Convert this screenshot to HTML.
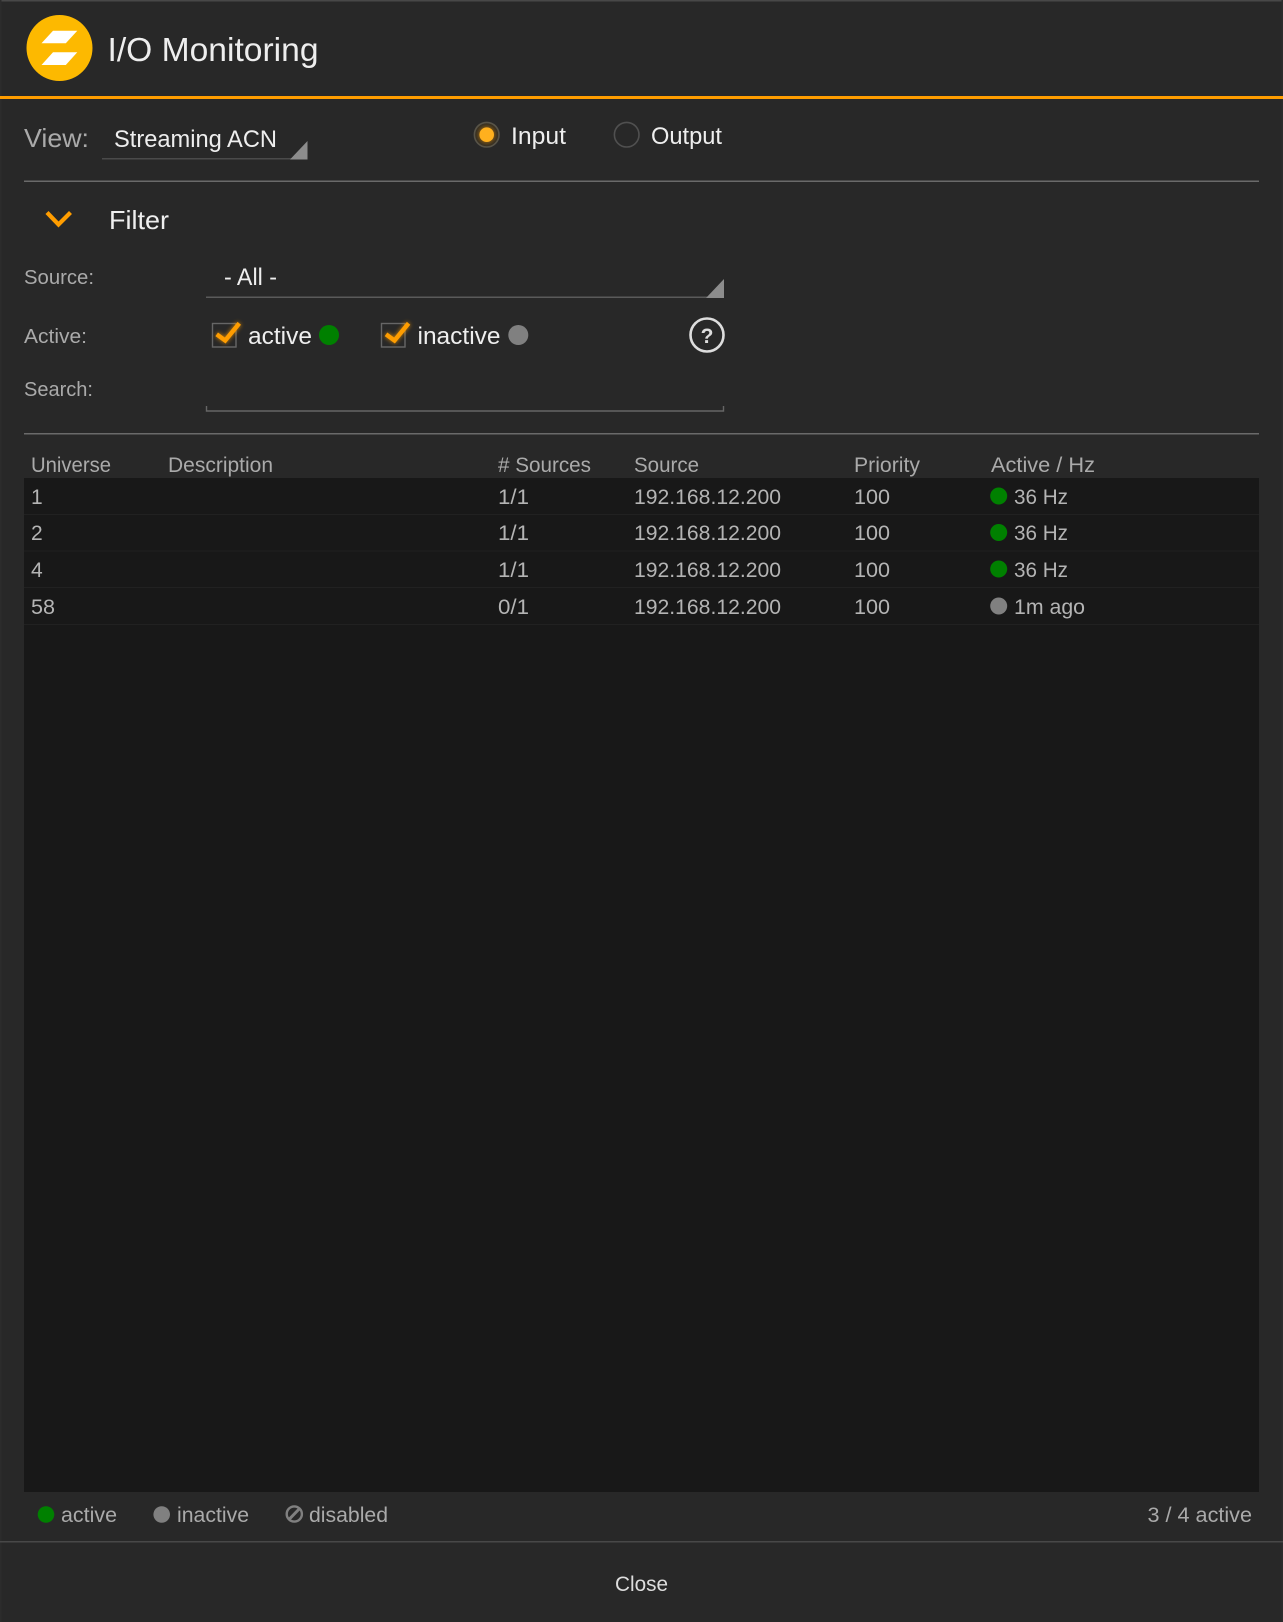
<!DOCTYPE html>
<html><head><meta charset="utf-8"><title>I/O Monitoring</title>
<style>
html,body{margin:0;padding:0;background:#282828;width:1283px;height:1622px;overflow:hidden}
svg{display:block;position:absolute;left:0;top:0}
text{font-family:"Liberation Sans",sans-serif;white-space:pre}
.h{font-size:21px;fill:#aaa}
.c{font-size:21px;fill:#b4b4b4}
.l{font-size:20px;fill:#aaa}
.w{font-size:24px;fill:#eee}
</style></head><body>
<svg width="1283" height="1622" viewBox="0 0 1283 1622" xmlns="http://www.w3.org/2000/svg">
<defs><filter id="g" x="-50%" y="-50%" width="200%" height="200%"><feGaussianBlur stdDeviation="2"/></filter></defs>
<rect width="1283" height="1622" fill="#282828"/>
<rect width="1283" height="1.5" fill="#484848"/>
<rect y="0" width="1.5" height="1622" fill="#2c2c2c"/>
<rect x="1281.5" y="0" width="1.5" height="1622" fill="#2c2c2c"/>
<rect y="96" width="1283" height="3" fill="#ff9d00"/>

<circle cx="59.5" cy="48" r="33" fill="#fdb900"/>
<polygon points="41.5,43.3 53,30.7 77.3,30.7 65.8,43.3" fill="#fff"/>
<polygon points="41.5,65 53,52.3 77.3,52.3 65.8,65" fill="#fff"/>
<text x="107.5" y="61" font-size="33" fill="#eee" textLength="211" lengthAdjust="spacingAndGlyphs">I/O Monitoring</text>

<text x="24" y="147" font-size="26" fill="#aaa" textLength="65" lengthAdjust="spacingAndGlyphs">View:</text>
<text class="w" x="114" y="147" textLength="163" lengthAdjust="spacingAndGlyphs">Streaming ACN</text>
<rect x="102" y="158" width="205" height="1.5" fill="#4a4a4a"/>
<polygon points="290,159.5 307.5,141 307.5,159.5" fill="#8c8c8c"/>

<circle cx="486.7" cy="134.7" r="12.3" fill="#302c24" stroke="#565349" stroke-width="1.6"/>
<circle cx="486.7" cy="134.7" r="8.5" fill="#ff9d00" opacity=".45" filter="url(#g)"/>
<circle cx="486.7" cy="134.7" r="7.3" fill="#ffb01e"/>
<text class="w" x="511" y="144" textLength="55" lengthAdjust="spacingAndGlyphs">Input</text>
<circle cx="626.7" cy="134.7" r="12.3" fill="none" stroke="#505050" stroke-width="1.6"/>
<text class="w" x="651" y="144" textLength="71" lengthAdjust="spacingAndGlyphs">Output</text>

<rect x="24" y="180.5" width="1235" height="1.5" fill="#6a6a6a"/>

<path d="M47 212.5L58.5 224.5L70.5 212.5" fill="none" stroke="#ff9d00" stroke-width="4.2"/>
<text x="109" y="229" font-size="26" fill="#eee" textLength="60" lengthAdjust="spacingAndGlyphs">Filter</text>

<text class="l" x="24" y="284" textLength="70" lengthAdjust="spacingAndGlyphs">Source:</text>
<text class="w" x="224" y="285" textLength="53" lengthAdjust="spacingAndGlyphs">- All -</text>
<rect x="206" y="296.5" width="518" height="1.5" fill="#5a5a5a"/>
<polygon points="706,298 724,279 724,298" fill="#8c8c8c"/>

<text class="l" x="24" y="343" textLength="63" lengthAdjust="spacingAndGlyphs">Active:</text>
<rect x="212.5" y="323.5" width="23.5" height="23.5" fill="none" stroke="#666" stroke-width="1.4"/>
<path d="M216.7 334.3L225.2 340.5L239.3 323.3" fill="none" stroke="#ff9d00" stroke-width="5" opacity=".7" filter="url(#g)"/>
<path d="M216.7 334.3L225.2 340.5L239.3 323.3" fill="none" stroke="#ff9d00" stroke-width="4.4"/>
<text class="w" x="248" y="344" textLength="64" lengthAdjust="spacingAndGlyphs">active</text>
<circle cx="329" cy="335" r="10" fill="#008000"/>

<rect x="381.5" y="323.5" width="23.5" height="23.5" fill="none" stroke="#666" stroke-width="1.4"/>
<path d="M386 334.3L394.5 340.5L408.6 323.3" fill="none" stroke="#ff9d00" stroke-width="5" opacity=".7" filter="url(#g)"/>
<path d="M386 334.3L394.5 340.5L408.6 323.3" fill="none" stroke="#ff9d00" stroke-width="4.4"/>
<text class="w" x="417.5" y="344" textLength="83" lengthAdjust="spacingAndGlyphs">inactive</text>
<circle cx="518.3" cy="335" r="10" fill="#808080"/>

<circle cx="707" cy="335" r="16.5" fill="none" stroke="#ddd" stroke-width="2.6"/>
<text x="707" y="343" font-size="21" font-weight="bold" fill="#ddd" text-anchor="middle">?</text>

<text class="l" x="24" y="396" textLength="69" lengthAdjust="spacingAndGlyphs">Search:</text>
<path d="M206.5 406V411H723.5V406" fill="none" stroke="#666" stroke-width="1.4"/>

<rect x="24" y="433" width="1235" height="1.5" fill="#6a6a6a"/>

<text class="h" x="31" y="472" textLength="80" lengthAdjust="spacingAndGlyphs">Universe</text>
<text class="h" x="168" y="472" textLength="105" lengthAdjust="spacingAndGlyphs">Description</text>
<text class="h" x="498" y="472" textLength="93" lengthAdjust="spacingAndGlyphs"># Sources</text>
<text class="h" x="634" y="472" textLength="65" lengthAdjust="spacingAndGlyphs">Source</text>
<text class="h" x="854" y="472" textLength="66" lengthAdjust="spacingAndGlyphs">Priority</text>
<text class="h" x="991" y="472" textLength="104" lengthAdjust="spacingAndGlyphs">Active / Hz</text>

<rect x="24" y="478" width="1235" height="1014" fill="#181818"/>
<rect x="24" y="514" width="1235" height="1" fill="#212121"/>
<rect x="24" y="550.5" width="1235" height="1" fill="#212121"/>
<rect x="24" y="587" width="1235" height="1" fill="#212121"/>
<rect x="24" y="624" width="1235" height="1" fill="#212121"/>

<g>
<text class="c" x="31" y="504">1</text>
<text class="c" x="498" y="504" textLength="31" lengthAdjust="spacingAndGlyphs">1/1</text>
<text class="c" x="634" y="504" textLength="147" lengthAdjust="spacingAndGlyphs">192.168.12.200</text>
<text class="c" x="854" y="504" textLength="36" lengthAdjust="spacingAndGlyphs">100</text>
<circle cx="998.7" cy="496" r="8.5" fill="#008000"/>
<text class="c" x="1014" y="504" textLength="54" lengthAdjust="spacingAndGlyphs">36 Hz</text>

<text class="c" x="31" y="540">2</text>
<text class="c" x="498" y="540" textLength="31" lengthAdjust="spacingAndGlyphs">1/1</text>
<text class="c" x="634" y="540" textLength="147" lengthAdjust="spacingAndGlyphs">192.168.12.200</text>
<text class="c" x="854" y="540" textLength="36" lengthAdjust="spacingAndGlyphs">100</text>
<circle cx="998.7" cy="532.5" r="8.5" fill="#008000"/>
<text class="c" x="1014" y="540" textLength="54" lengthAdjust="spacingAndGlyphs">36 Hz</text>

<text class="c" x="31" y="577">4</text>
<text class="c" x="498" y="577" textLength="31" lengthAdjust="spacingAndGlyphs">1/1</text>
<text class="c" x="634" y="577" textLength="147" lengthAdjust="spacingAndGlyphs">192.168.12.200</text>
<text class="c" x="854" y="577" textLength="36" lengthAdjust="spacingAndGlyphs">100</text>
<circle cx="998.7" cy="569" r="8.5" fill="#008000"/>
<text class="c" x="1014" y="577" textLength="54" lengthAdjust="spacingAndGlyphs">36 Hz</text>

<text class="c" x="31" y="614" textLength="24" lengthAdjust="spacingAndGlyphs">58</text>
<text class="c" x="498" y="614" textLength="31" lengthAdjust="spacingAndGlyphs">0/1</text>
<text class="c" x="634" y="614" textLength="147" lengthAdjust="spacingAndGlyphs">192.168.12.200</text>
<text class="c" x="854" y="614" textLength="36" lengthAdjust="spacingAndGlyphs">100</text>
<circle cx="998.7" cy="606" r="8.5" fill="#808080"/>
<text class="c" x="1014" y="614" textLength="71" lengthAdjust="spacingAndGlyphs">1m ago</text>
</g>

<circle cx="46" cy="1514.5" r="8.3" fill="#008000"/>
<text class="h" x="61" y="1522" textLength="56" lengthAdjust="spacingAndGlyphs">active</text>
<circle cx="161.7" cy="1514.5" r="8.3" fill="#808080"/>
<text class="h" x="177" y="1522" textLength="72" lengthAdjust="spacingAndGlyphs">inactive</text>
<circle cx="294.3" cy="1514" r="7.6" fill="none" stroke="#808080" stroke-width="2.4"/>
<path d="M289 1519.5L299.6 1508.5" stroke="#808080" stroke-width="3"/>
<text class="h" x="309" y="1522" textLength="79" lengthAdjust="spacingAndGlyphs">disabled</text>
<text class="h" x="1147.5" y="1522" textLength="104.5" lengthAdjust="spacingAndGlyphs">3 / 4 active</text>

<rect y="1541" width="1283" height="1.5" fill="#484848"/>
<text x="615" y="1591" font-size="21" fill="#ddd" textLength="53" lengthAdjust="spacingAndGlyphs">Close</text>
</svg>
</body></html>
